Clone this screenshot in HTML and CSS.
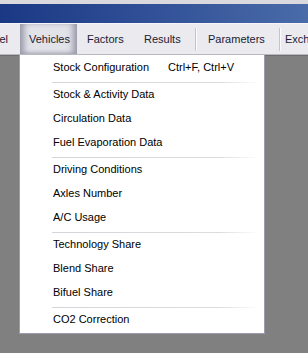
FILE: index.html
```html
<!DOCTYPE html>
<html lang="en">
<head>
    <meta charset="UTF-8">
    <meta name="viewport" content="width=device-width, initial-scale=1.0">
    <title>Vehicles Menu</title>
    <link rel="stylesheet" href="styles.css">
</head>
<body>

    <div class="top-strip"></div>
    <div class="title-bar"></div>

    <div class="menu-bar">
        <div class="menu-item cut"><span>Model</span></div>
        <div class="menu-item active">Vehicles</div>
        <div class="menu-item factors">Factors</div>
        <div class="menu-item results">Results</div>
        <div class="menu-sep"></div>
        <div class="menu-item params">Parameters</div>
        <div class="menu-sep"></div>
        <div class="menu-item tight">Exchange</div>
    </div>

    <div class="workspace">
        <div class="dropdown">
            <div class="drop-item"><span class="label">Stock Configuration</span><span class="shortcut">Ctrl+F, Ctrl+V</span></div>
            <div class="drop-sep"></div>
            <div class="drop-item"><span class="label">Stock &amp; Activity Data</span></div>
            <div class="drop-item"><span class="label">Circulation Data</span></div>
            <div class="drop-item"><span class="label">Fuel Evaporation Data</span></div>
            <div class="drop-sep"></div>
            <div class="drop-item"><span class="label">Driving Conditions</span></div>
            <div class="drop-item"><span class="label">Axles Number</span></div>
            <div class="drop-item"><span class="label">A/C Usage</span></div>
            <div class="drop-sep"></div>
            <div class="drop-item"><span class="label">Technology Share</span></div>
            <div class="drop-item"><span class="label">Blend Share</span></div>
            <div class="drop-item"><span class="label">Bifuel Share</span></div>
            <div class="drop-sep"></div>
            <div class="drop-item"><span class="label">CO2 Correction</span></div>
        </div>
    </div>

</body>
</html>
```

FILE: styles.css
```css
html, body { margin: 0; padding: 0; height: 100%; }
body { font-family: 'Liberation Sans', Arial, sans-serif; font-size: 11px; background-color: #808080; overflow: hidden; display: flex; flex-direction: column; }
.top-strip { height: 4px; background-color: #d9d9de; flex-shrink: 0; }
.title-bar { height: 19px; background: linear-gradient(to right, #1b3884, #2f4e96 45%, #4a6ba8); flex-shrink: 0; }
.menu-bar { display: flex; height: 30px; background-color: #eaeaef; border-top: 1px solid #f6f6fa; border-bottom: 1px solid #b8b8c2; white-space: nowrap; overflow: hidden; flex-shrink: 0; color: #1a1a33; }
.menu-item { line-height: 30px; padding-left: 10px; flex-shrink: 0; box-sizing: border-box; }
.menu-item.cut { width: 20px; padding: 0 12px 0 0; display: flex; justify-content: flex-end; overflow: hidden; }
.menu-item.cut span { flex-shrink: 0; }
.menu-item.active { width: 57px; padding-left: 9px; background-color: #e2e2e9; box-shadow: inset 7px 0 6px -3px #9898a8, inset -7px 0 6px -3px #9898a8, inset 0 -3px 4px -2px #b0b0bc; }
.menu-item.factors { width: 57px; }
.menu-item.results { width: 61px; }
.menu-item.params { width: 81px; }
.menu-item.tight { padding-left: 3px; }
.menu-sep { width: 1px; margin: 4px 1px 3px 0; background-color: #c4c4cc; border-right: 1px solid #fbfbfd; flex-shrink: 0; }
.workspace { flex: 1; position: relative; border-top: 1px solid #6e6e6e; }
.dropdown { position: absolute; left: 19px; top: -1px; width: 246px; box-sizing: border-box; padding-top: 2px; background-color: #ffffff; border: 1px solid #9c9cb0; border-top: none; }
.drop-item { display: flex; height: 24px; line-height: 20px; padding: 0 0 4px 33px; box-sizing: border-box; color: #000000; white-space: nowrap; }
.drop-item .label { width: 115px; flex-shrink: 0; }
.drop-sep { height: 1px; margin: 1px 4px 1px 32px; background: linear-gradient(to right, #d4d4da, #dcdce0 80%, #ffffff); }
```
